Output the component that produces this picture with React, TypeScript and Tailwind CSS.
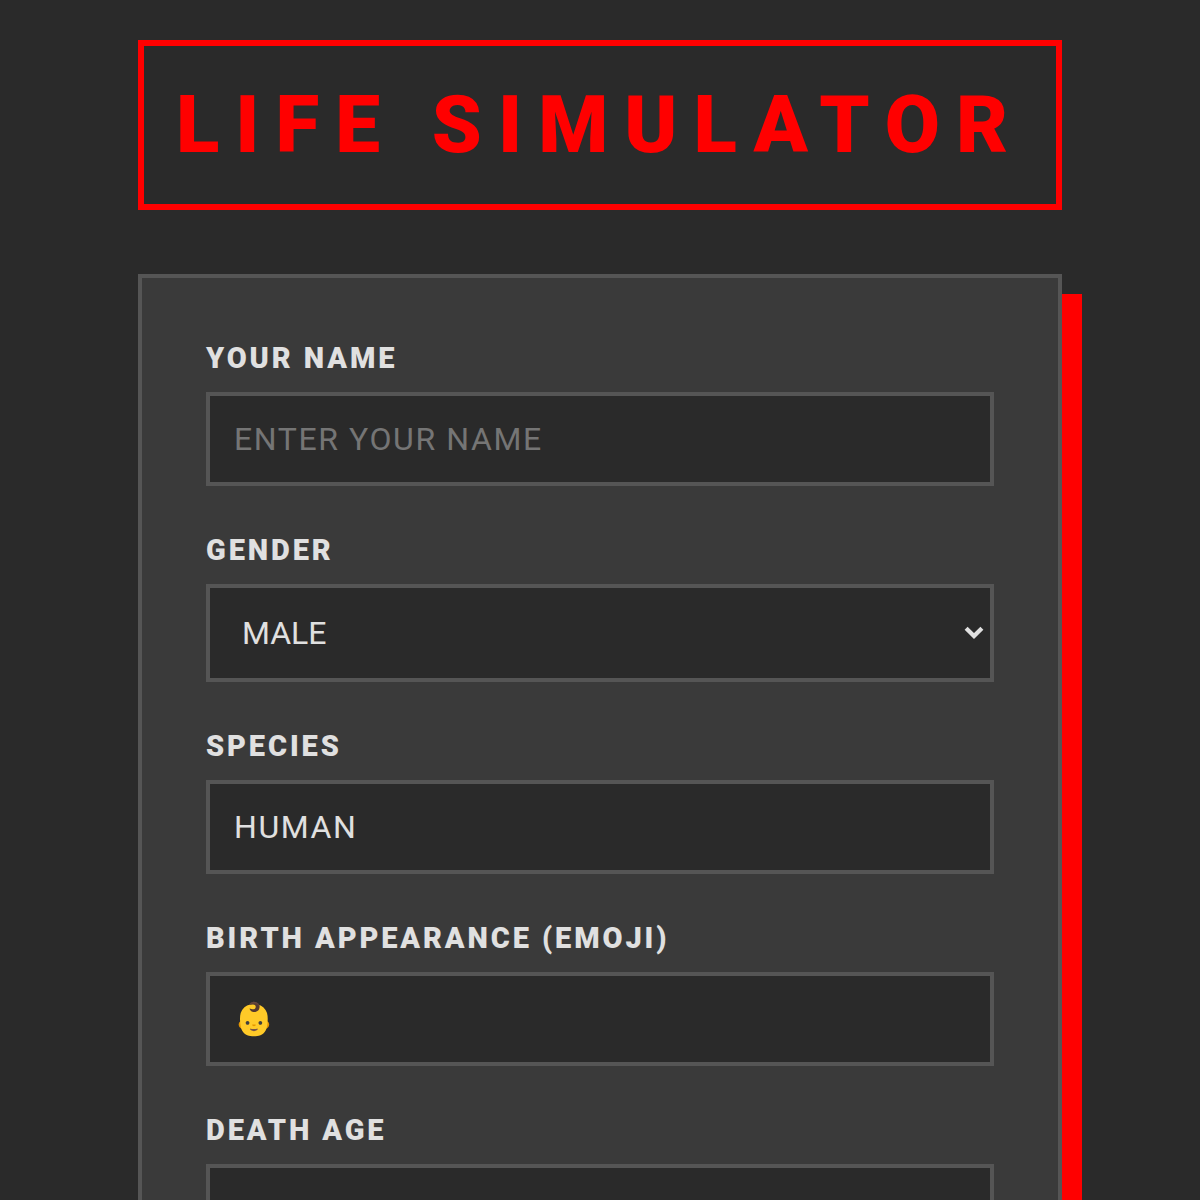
import { useState } from "react";

const inputStyle =
  "block w-full border-4 border-[#555555] bg-[#2a2a2a] p-6 text-[32px] leading-[38px] tracking-wider text-[#e0e0e0] uppercase outline-none placeholder:text-[#757575]";
const labelStyle =
  "mb-[18px] block text-[29px] leading-8 font-black tracking-widest uppercase";

const App = () => {
  const [form, setForm] = useState({
    name: "",
    gender: "male",
    species: "Human",
    emoji: "👶",
    deathAge: "80",
  });

  const update = (key: string, value: string) => {
    setForm((prev) => ({ ...prev, [key]: value }));
  };

  return (
    <main className="h-screen overflow-y-auto bg-[#2a2a2a] px-10 py-10 font-['Roboto',sans-serif] text-[#e0e0e0] [scrollbar-width:none]">
      <div className="mx-auto max-w-[924px]">
        <h1 className="mb-16 border-[6px] border-[#ff0000] py-8 text-center text-[80px] leading-[94px] font-black tracking-[16px] text-[#ff0000] uppercase">
          Life Simulator
        </h1>
        <form className="flex flex-col gap-12 border-4 border-[#555555] bg-[#3a3a3a] p-16 shadow-[20px_20px_0_#ff0000]">
          <div>
            <label htmlFor="name" className={labelStyle}>
              Your Name
            </label>
            <input
              id="name"
              type="text"
              placeholder="Enter your name"
              value={form.name}
              onChange={(e) => update("name", e.target.value)}
              className={inputStyle}
            />
          </div>
          <div>
            <label htmlFor="gender" className={labelStyle}>
              Gender
            </label>
            <div className="relative">
              <select
                id="gender"
                value={form.gender}
                onChange={(e) => update("gender", e.target.value)}
                className="block w-full appearance-none border-4 border-[#555555] bg-[#2a2a2a] px-8 py-6 text-[32px] leading-[42px] text-[#e0e0e0] uppercase outline-none"
              >
                <option value="male">Male</option>
                <option value="female">Female</option>
              </select>
              {/* dropdown arrow */}
              <svg
                viewBox="0 0 20 14"
                className="pointer-events-none absolute top-1/2 right-2.5 h-3.5 w-5 -translate-y-1/2"
                fill="none"
                stroke="#e0e0e0"
                strokeWidth="4.2"
              >
                <path d="M2.1 2.2 10 10.1l7.9-7.9" />
              </svg>
            </div>
          </div>
          <div>
            <label htmlFor="species" className={labelStyle}>
              Species
            </label>
            <input
              id="species"
              type="text"
              value={form.species}
              onChange={(e) => update("species", e.target.value)}
              className={inputStyle}
            />
          </div>
          <div>
            <label htmlFor="emoji" className={labelStyle}>
              Birth Appearance (Emoji)
            </label>
            <input
              id="emoji"
              type="text"
              value={form.emoji}
              onChange={(e) => update("emoji", e.target.value)}
              className={inputStyle}
            />
          </div>
          <div>
            <label htmlFor="deathAge" className={labelStyle}>
              Death Age
            </label>
            <input
              id="deathAge"
              type="number"
              value={form.deathAge}
              onChange={(e) => update("deathAge", e.target.value)}
              className={inputStyle}
            />
          </div>
        </form>
      </div>
    </main>
  );
};

export default App;
